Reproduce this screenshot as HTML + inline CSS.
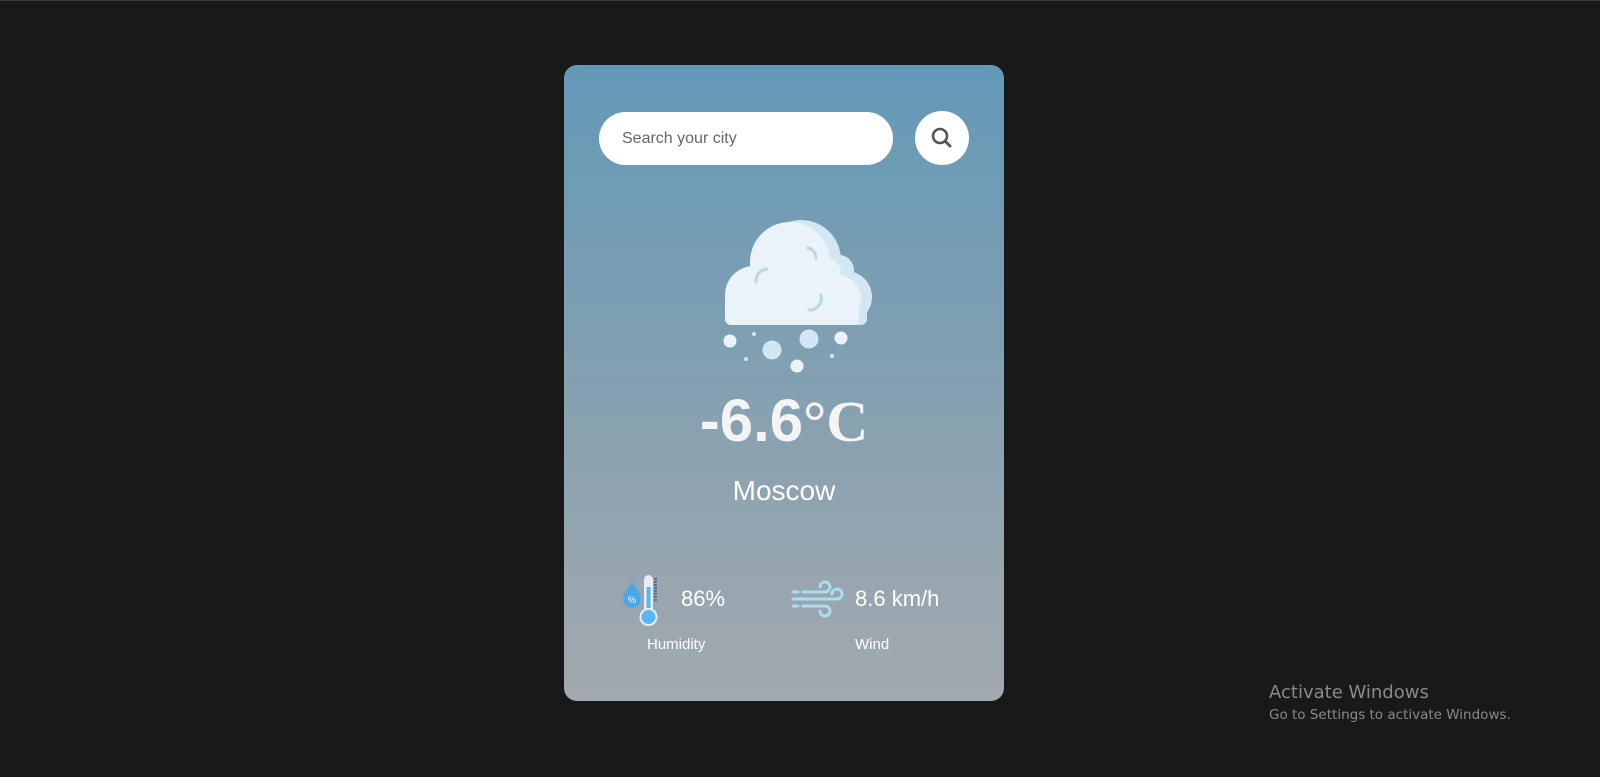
<!DOCTYPE html>
<html><head><style>
html,body{margin:0;height:777px;background:#191919;overflow:hidden;font-family:"Liberation Sans",Arial,sans-serif}
.top{position:absolute;left:0;top:0;width:1600px;height:1px;background:#3a3a3a}
.card{position:absolute;left:564px;top:65px;width:440px;height:636px;border-radius:13px;background:linear-gradient(180deg,#6399b8 0%,#8aa2b0 60%,#a3a9af 100%)}
.inp{position:absolute;left:35px;top:47px;width:294px;height:53px;border-radius:27px;background:#fff;color:#666;font-size:16px;line-height:53px;padding-left:23px;box-sizing:border-box}
.btn{position:absolute;left:351px;top:46px;width:54px;height:54px;border-radius:50%;background:#fff}
.temp{position:absolute;left:0;width:440px;top:320px;text-align:center;color:#f4f4f4;font-size:60px;font-weight:bold;line-height:72px}
.temp span{font-family:"Liberation Serif",serif;font-weight:bold;font-size:58px}
.city{position:absolute;left:0;width:440px;top:410px;text-align:center;color:#fff;font-size:28px}
.v{position:absolute;color:#fff;font-size:22px;top:521px}
.l{position:absolute;color:#fff;font-size:15px;top:571px}
.aw{position:absolute;left:1269px;top:682px;color:#8a8a8a;font-size:18px;font-family:"DejaVu Sans","Liberation Sans",sans-serif}
.aw2{position:absolute;left:1269px;top:707px;color:#8a8a8a;font-size:13.5px;font-family:"DejaVu Sans","Liberation Sans",sans-serif}
</style></head><body>
<div class="top"></div>
<div class="card">
<div class="inp">Search your city</div>
<div class="btn"><svg width="54" height="54"><circle cx="25" cy="25" r="7" fill="none" stroke="#555" stroke-width="2.6"/><line x1="30" y1="30" x2="35" y2="35" stroke="#555" stroke-width="3" stroke-linecap="round"/></svg></div>
<svg style="position:absolute;left:140px;top:150px" width="170" height="170" viewBox="0 0 170 170">
<g fill="#d2e6f4" transform="translate(8,0)">
<circle cx="50" cy="80" r="29"/><circle cx="89" cy="45" r="40"/><circle cx="134" cy="82" r="26"/><circle cx="127" cy="55" r="15"/>
<rect x="21" y="75" width="134" height="35" rx="6"/>
</g>
<g fill="#eaf3fa">
<circle cx="50" cy="80" r="29"/><circle cx="86" cy="47" r="40"/><circle cx="133" cy="84" r="24"/><circle cx="122" cy="58" r="15"/>
<rect x="21" y="80" width="134" height="30" rx="6"/>
</g>
<path d="M63 54 a12 12 0 0 0 -11 13" fill="none" stroke="#b9d6ea" stroke-width="3" stroke-linecap="round"/>
<path d="M104 33 a10 10 0 0 1 8 10" fill="none" stroke="#b9d6ea" stroke-width="3" stroke-linecap="round"/>
<path d="M117 80 a12 12 0 0 1 -12 15" fill="none" stroke="#b9d6ea" stroke-width="3" stroke-linecap="round"/>
<g transform="translate(0,6)">
<circle cx="26" cy="120" r="6.5" fill="#eaf3fa"/><circle cx="50" cy="113" r="2" fill="#d2e6f4"/>
<circle cx="68" cy="129" r="9.5" fill="#d2e6f4"/><circle cx="105" cy="118" r="9.5" fill="#d2e6f4"/>
<circle cx="137" cy="117" r="6.5" fill="#eaf3fa"/><circle cx="93" cy="145" r="6.5" fill="#eaf3fa"/>
<circle cx="42" cy="138" r="2" fill="#d2e6f4"/><circle cx="128" cy="135" r="2" fill="#d2e6f4"/>
</g>
</svg>
<div class="temp">-6.6<span>°C</span></div>
<div class="city">Moscow</div>
<svg style="position:absolute;left:56px;top:508px" width="42" height="56" viewBox="0 0 42 56">
<path d="M12 8 C8 16 3 20 3 26 a9 9 0 0 0 18 0 C21 20 16 16 12 8Z" fill="#4ba8e8"/>
<text x="12" y="30" font-size="9" fill="#fff" text-anchor="middle" font-family="Liberation Sans">%</text>
<rect x="24" y="2" width="9" height="40" rx="4.5" fill="#e6eef3"/>
<rect x="26.5" y="14" width="4" height="30" fill="#5ab6f0"/>
<circle cx="28.5" cy="44" r="8" fill="#5ab6f0" stroke="#e6eef3" stroke-width="2"/>
<path d="M34 6h3M34 9h3M34 12h3M34 15h3M34 18h3M34 21h3M34 24h3M34 27h3" stroke="#3b5578" stroke-width="1.2"/>
</svg>
<div class="v" style="left:117px">86%</div>
<div class="l" style="left:83px">Humidity</div>
<svg style="position:absolute;left:227px;top:515px" width="56" height="40" viewBox="0 0 56 40">
<g fill="none" stroke="#a8def0" stroke-width="3" stroke-linecap="round">
<path d="M2 12h5M12 12h22 a5 5 0 1 0 -5 -5"/>
<path d="M2 19h44 a5 5 0 1 0 -5 -5"/>
<path d="M2 26h5M12 26h22 a5 5 0 1 1 -5 5"/>
</g></svg>
<div class="v" style="left:291px">8.6 km/h</div>
<div class="l" style="left:291px">Wind</div>
</div>
<div class="aw">Activate Windows</div>
<div class="aw2">Go to Settings to activate Windows.</div>
</body></html>
